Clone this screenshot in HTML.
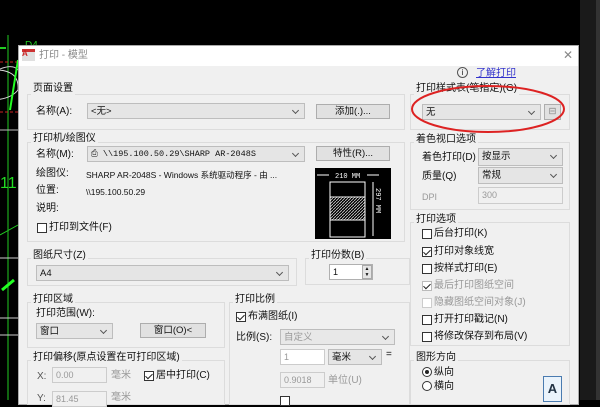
<!DOCTYPE html>
<html><head><meta charset="utf-8"><style>
*{margin:0;padding:0;box-sizing:border-box}
body{width:600px;height:400px;overflow:hidden;background:#000;position:relative;font-family:"Liberation Sans","Noto Sans CJK SC",sans-serif;font-size:10px;color:#111;line-height:12px}
.a{position:absolute;white-space:nowrap}
.dlg{position:absolute;left:18px;top:45px;width:561px;height:360px;background:#f0f0f0;border:1px solid #aaa}
.tb{position:absolute;left:0;top:0;width:100%;height:20px;background:#fff}
.g{position:absolute;border:1px solid #dcdcdc}
.gl{position:absolute;background:#f0f0f0;padding:0 2px;font-size:10px}
.dd{position:absolute;background:#e5e5e5;border:1px solid #bdbdbd;height:16px;font-size:9.5px;padding:1px 3px;line-height:13px}
.dd:after{content:"";position:absolute;right:6px;top:4px;width:4px;height:4px;border-right:1px solid #555;border-bottom:1px solid #555;transform:rotate(45deg)}
.dis{color:#999;background:#e8e8e8}
.bt{position:absolute;background:#e1e1e1;border:1px solid #adadad;height:15px;text-align:center;font-size:9.5px;line-height:13px}
.in{position:absolute;background:#fff;border:1px solid #b0b0b0;height:16px;font-size:9px;padding:1px 3px;line-height:13px}
.ind{background:#f0f0f0;border-color:#ccc;color:#999}
.cb{position:absolute;width:10px;height:10px;border:1px solid #333;background:#fff}
.ck:after{content:"";position:absolute;left:2px;top:0px;width:3px;height:6px;border-right:1px solid #222;border-bottom:1px solid #222;transform:rotate(45deg)}
</style></head><body>
<svg class="a" style="left:0;top:0" width="600" height="400">
<line x1="8" y1="35" x2="8" y2="400" stroke="#2c2" stroke-width="1"/>
<line x1="0" y1="48" x2="6" y2="48" stroke="#2c2" stroke-width="2"/>
<path d="M-20 80 Q10 60 18 70" stroke="#ccc" fill="none"/>
<path d="M-10 70 Q20 68 18 90 Q10 100 -10 100" stroke="#ddd" fill="none"/>
<line x1="0" y1="62" x2="18" y2="62" stroke="#c22" stroke-dasharray="3 2"/>
<line x1="0" y1="112" x2="18" y2="112" stroke="#c22" stroke-dasharray="3 2"/>
<line x1="0" y1="130" x2="18" y2="130" stroke="#bbb"/>
<line x1="10" y1="110" x2="18" y2="60" stroke="#2f2" stroke-width="2"/>
<text x="0" y="188" fill="#2d2" font-size="16" font-family="Liberation Sans">11</text>
<line x1="0" y1="258" x2="18" y2="258" stroke="#ccc"/>
<line x1="0" y1="318" x2="18" y2="318" stroke="#ccc"/>
<line x1="0" y1="335" x2="18" y2="335" stroke="#ccc"/>
<line x1="2" y1="290" x2="14" y2="280" stroke="#2f2" stroke-width="3"/>
<line x1="0" y1="235" x2="18" y2="225" stroke="#2c2"/>
<text x="25" y="48" fill="#2c2" font-size="10">D4</text>
<rect x="580" y="0" width="20" height="400" fill="#1a1a1a"/>
<rect x="596" y="0" width="4" height="400" fill="#333"/>
</svg>
<div class="dlg">
<div class="tb"><div class="a" style="left:3px;top:3px;width:13px;height:12px;background:#e0e0e0;border-top:3px solid #c33"></div><span class="a" style="left:3px;top:2px;color:#c22;font-size:8px;font-weight:bold">A</span><span class="a" style="left:20px;top:4px;color:#888">打印 - 模型</span><span class="a" style="left:544px;top:3px;color:#888;font-size:12px">✕</span></div>
</div>
<div class="g" style="left:27px;top:94px;width:378px;height:36px"></div><span class="a gl" style="left:31px;top:83px">页面设置</span>
<span class="a" style="left:36px;top:106px">名称(A):</span>
<div class="dd" style="left:87px;top:103px;width:218px">&lt;无&gt;</div>
<div class="bt" style="left:316px;top:104px;width:74px">添加(.)...</div>
<div class="g" style="left:27px;top:142px;width:378px;height:100px"></div><span class="a gl" style="left:31px;top:133px">打印机/绘图仪</span>
<span class="a" style="left:36px;top:149px">名称(M):</span>
<div class="dd" style="left:87px;top:146px;width:218px;font-family:'Liberation Mono',monospace;font-size:8.5px">⎙ \\195.100.50.29\SHARP AR-2048S</div>
<div class="bt" style="left:316px;top:146px;width:74px">特性(R)...</div>
<span class="a" style="left:36px;top:168px">绘图仪:</span><span class="a" style="left:86px;top:169px;font-size:8.5px">SHARP AR-2048S - Windows 系统驱动程序 - 由 ...</span>
<span class="a" style="left:36px;top:185px">位置:</span><span class="a" style="left:86px;top:186px;font-size:8.5px">\\195.100.50.29</span>
<span class="a" style="left:36px;top:203px">说明:</span>
<div class="cb" style="left:37px;top:223px"></div><span class="a" style="left:49px;top:222px">打印到文件(F)</span>
<svg class="a" style="left:315px;top:168px" width="76" height="71"><rect width="76" height="71" fill="#000"/>
<rect x="15" y="14" width="35" height="55" fill="none" stroke="#fff"/><rect x="15" y="29" width="35" height="23" fill="url(#h)" stroke="#fff"/>
<defs><pattern id="h" width="3" height="3" patternUnits="userSpaceOnUse"><path d="M0 3L3 0" stroke="#ccc" stroke-width=".8"/></pattern></defs>
<text x="20" y="10" fill="#fff" font-size="7" font-family="Liberation Mono">210 MM</text><line x1="2" y1="7" x2="14" y2="7" stroke="#fff"/><line x1="52" y1="7" x2="64" y2="7" stroke="#fff"/>
<line x1="58" y1="14" x2="58" y2="68" stroke="#fff"/><text x="61" y="20" fill="#fff" font-size="7" font-family="Liberation Mono" transform="rotate(90 61 20)">297 MM</text></svg>
<div class="g" style="left:27px;top:258px;width:270px;height:28px"></div><span class="a gl" style="left:31px;top:250px">图纸尺寸(Z)</span>
<div class="dd" style="left:36px;top:265px;width:253px">A4</div>
<div class="g" style="left:305px;top:258px;width:105px;height:27px"></div><span class="a gl" style="left:309px;top:250px">打印份数(B)</span>
<div class="in" style="left:329px;top:264px;width:44px">1</div><div class="a" style="left:362px;top:265px;width:10px;height:14px;background:#e5e5e5;border:1px solid #aaa;font-size:5px;text-align:center;line-height:6px">▲<br>▼</div>
<div class="g" style="left:27px;top:302px;width:198px;height:46px"></div><span class="a gl" style="left:31px;top:294px">打印区域</span>
<span class="a" style="left:36px;top:308px">打印范围(W):</span>
<div class="dd" style="left:36px;top:323px;width:77px">窗口</div>
<div class="bt" style="left:140px;top:323px;width:66px">窗口(O)&lt;</div>
<div class="g" style="left:27px;top:360px;width:198px;height:45px"></div><span class="a gl" style="left:31px;top:352px">打印偏移(原点设置在可打印区域)</span>
<span class="a" style="left:37px;top:371px;color:#555">X:</span><div class="in ind" style="left:52px;top:367px;width:55px">0.00</div><span class="a" style="left:111px;top:370px;color:#999">毫米</span>
<div class="cb ck" style="left:144px;top:371px"></div><span class="a" style="left:156px;top:370px">居中打印(C)</span>
<span class="a" style="left:37px;top:393px;color:#555">Y:</span><div class="in ind" style="left:52px;top:391px;width:55px">81.45</div><span class="a" style="left:111px;top:392px;color:#999">毫米</span>
<div class="g" style="left:229px;top:302px;width:181px;height:103px"></div><span class="a gl" style="left:233px;top:294px">打印比例</span>
<div class="cb ck" style="left:236px;top:312px"></div><span class="a" style="left:248px;top:311px">布满图纸(I)</span>
<span class="a" style="left:236px;top:332px">比例(S):</span><div class="dd dis" style="left:280px;top:329px;width:115px">自定义</div>
<div class="in ind" style="left:280px;top:349px;width:45px;background:#fff">1</div><div class="dd" style="left:328px;top:349px;width:54px;background:#e5e5e5">毫米</div><span class="a" style="left:386px;top:349px">=</span>
<div class="in ind" style="left:280px;top:372px;width:45px">0.9018</div><span class="a" style="left:328px;top:375px;color:#999">单位(U)</span>
<div class="cb" style="left:280px;top:396px"></div>
<span class="a" style="left:457px;top:67px;width:11px;height:11px;border:1px solid #555;border-radius:50%;font-size:8px;text-align:center;line-height:9px">i</span>
<span class="a" style="left:476px;top:68px;color:#33c;text-decoration:underline">了解打印</span>
<div class="g" style="left:410px;top:94px;width:160px;height:36px"></div><span class="a gl" style="left:414px;top:83px">打印样式表(笔指定)(G)</span>
<div class="dd" style="left:422px;top:104px;width:119px">无</div><div class="bt" style="left:544px;top:104px;width:17px;height:16px;color:#888">⊟</div>
<div class="g" style="left:410px;top:142px;width:160px;height:68px"></div><span class="a gl" style="left:414px;top:134px">着色视口选项</span>
<span class="a" style="left:422px;top:152px">着色打印(D)</span><div class="dd" style="left:478px;top:148px;width:85px;height:18px">按显示</div>
<span class="a" style="left:422px;top:171px">质量(Q)</span><div class="dd" style="left:478px;top:167px;width:85px;height:17px">常规</div>
<span class="a" style="left:422px;top:191px;color:#999;font-size:9px">DPI</span><div class="in ind" style="left:478px;top:187px;width:85px;height:17px">300</div>
<div class="g" style="left:410px;top:222px;width:160px;height:124px"></div><span class="a gl" style="left:414px;top:214px">打印选项</span>
<div class="cb" style="left:422px;top:229px"></div><span class="a" style="left:434px;top:228px">后台打印(K)</span>
<div class="cb ck" style="left:422px;top:247px"></div><span class="a" style="left:434px;top:246px">打印对象线宽</span>
<div class="cb" style="left:422px;top:264px"></div><span class="a" style="left:434px;top:263px">按样式打印(E)</span>
<div class="cb ck" style="left:422px;top:281px;border-color:#bbb"></div><span class="a" style="left:434px;top:280px;color:#999">最后打印图纸空间</span>
<div class="cb" style="left:422px;top:298px;border-color:#ccc"></div><span class="a" style="left:434px;top:297px;color:#999">隐藏图纸空间对象(J)</span>
<div class="cb" style="left:422px;top:315px"></div><span class="a" style="left:434px;top:314px">打开打印戳记(N)</span>
<div class="cb" style="left:422px;top:332px"></div><span class="a" style="left:434px;top:331px">将修改保存到布局(V)</span>
<div class="g" style="left:410px;top:360px;width:160px;height:45px"></div><span class="a gl" style="left:414px;top:352px">图形方向</span>
<span class="a" style="left:422px;top:367px;width:10px;height:10px;border:1px solid #333;border-radius:50%;background:#fff"><span class="a" style="left:2px;top:2px;width:4px;height:4px;background:#222;border-radius:50%"></span></span><span class="a" style="left:434px;top:367px">纵向</span>
<span class="a" style="left:422px;top:381px;width:10px;height:10px;border:1px solid #333;border-radius:50%;background:#fff"></span><span class="a" style="left:434px;top:381px">横向</span>
<div class="a" style="left:543px;top:376px;width:19px;height:26px;background:#eaf3fb;border:1px solid #4a7bb0;font-size:13px;font-weight:bold;color:#234;text-align:center;line-height:24px">A</div>
<svg class="a" style="left:410px;top:82px" width="160" height="56"><ellipse cx="78" cy="27" rx="76" ry="23" fill="none" stroke="#d22" stroke-width="2"/></svg>
</body></html>
